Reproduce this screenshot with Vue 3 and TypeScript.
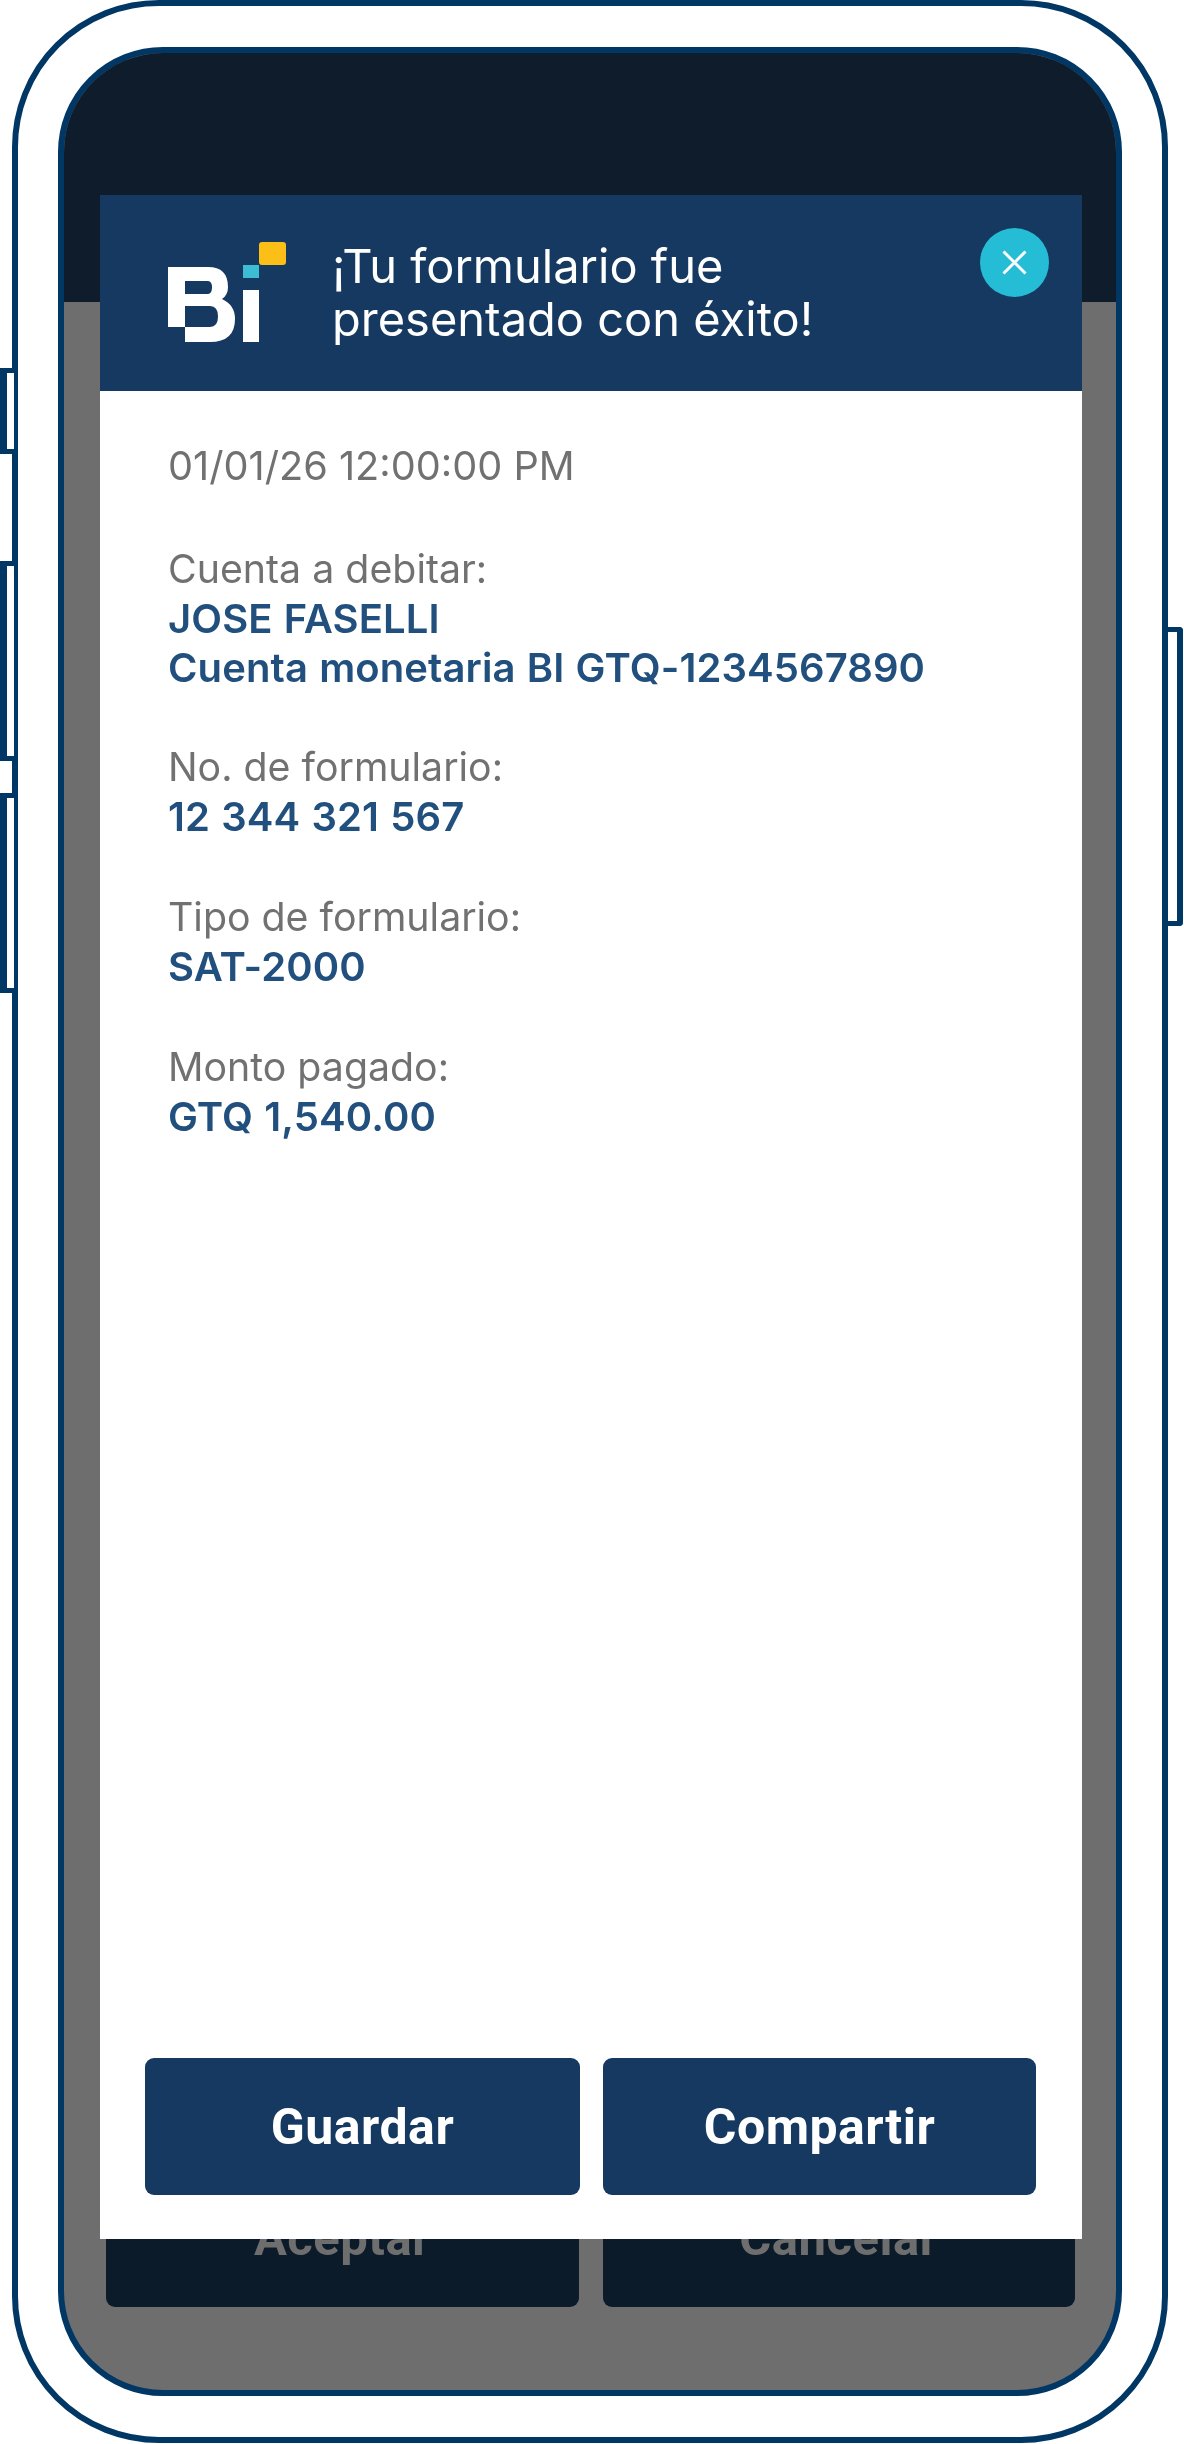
<script setup lang="ts">
interface Row { label: string; values: string[] }
const rows: Row[] = [
  { label: 'Cuenta a debitar:', values: ['JOSE FASELLI', 'Cuenta monetaria BI GTQ-1234567890'] },
  { label: 'No. de formulario:', values: ['12 344 321 567'] },
  { label: 'Tipo de formulario:', values: ['SAT-2000'] },
  { label: 'Monto pagado:', values: ['GTQ 1,540.00'] },
]
</script>

<template>
  <div class="page">
    <span class="key left k1"></span>
    <span class="key left k2"></span>
    <span class="key left k3"></span>
    <span class="key right k4"></span>
    <div class="phone">
      <div class="screen">
        <div class="status"></div>
        <div class="under">
          <div class="actions">
            <div class="under-btn">Aceptar</div>
            <div class="under-btn">Cancelar</div>
          </div>
        </div>
      </div>
    </div>

    <section class="modal">
      <header class="head">
        <svg class="logo" width="118" height="100" viewBox="0 0 118 100" aria-label="BI">
          <path fill="#fff" fill-rule="evenodd" d="M0 25H40Q60 25 60 45Q60 53 54 57Q67 63 67 77Q67 100 42 100H17V85H0ZM17 39V52H40Q44 52 44 45.500Q44 39 40 39ZM17 64V85H42Q50 85 50 74.500Q50 64 42 64Z"/>
          <rect x="75" y="48" width="16" height="52" fill="#fff"/>
          <rect x="75" y="23" width="16" height="13" fill="#3dbdd3"/>
          <rect x="91" y="0" width="27" height="23" rx="3" fill="#fbbf17"/>
        </svg>
        <h1 class="title">¡Tu formulario fue<br />presentado con éxito!</h1>
        <button class="close" aria-label="Cerrar">
          <svg width="25" height="25" viewBox="0 0 25 25">
            <path d="M1.500 1.500L23.500 23.500M23.500 1.500L1.500 23.500" stroke="#fff" stroke-width="3" fill="none"/>
          </svg>
        </button>
      </header>
      <div class="body">
        <p class="date">01/01/26 12:00:00 PM</p>
        <div v-for="row in rows" :key="row.label" class="group">
          <p class="label">{{ row.label }}</p>
          <p v-for="value in row.values" :key="value" class="value">{{ value }}</p>
        </div>
      </div>
      <footer class="foot">
        <button class="btn">Guardar</button>
        <button class="btn">Compartir</button>
      </footer>
    </section>
  </div>
</template>

<style>
html, body { margin: 0; background: #fff; }
</style>

<style scoped>
.page {
  position: relative;
  width: 1184px;
  height: 2444px;
  overflow: hidden;
  background: #fff;
  font-family: Inter, "Liberation Sans", sans-serif;
  filter: blur(0.6px);
}
.phone {
  box-sizing: border-box;
  width: 1156px;
  height: 2443px;
  margin-left: 12px;
  padding: 41px 40px 41px 40px;
  border: 6px solid #003764;
  border-radius: 147px;
  background: #fff;
}
.screen {
  box-sizing: border-box;
  display: flex;
  flex-direction: column;
  height: 100%;
  border: 6px solid #003764;
  border-radius: 105px;
  overflow: hidden;
  background: #6e6e6e;
}
.status { height: 249px; background: #0f1c2b; }
.under {
  flex: 1;
  display: flex;
  flex-direction: column;
  justify-content: flex-end;
  padding: 0 41px 83px 42px;
}
.actions { display: grid; grid-template-columns: 1fr 1fr; gap: 24px; }
.under-btn {
  height: 137px;
  display: flex;
  align-items: center;
  justify-content: center;
  border-radius: 9px;
  background: #0c1b2a;
  color: #6e6e6e;
  font-family: Roboto, sans-serif;
  font-weight: 700;
  font-size: 49px;
  letter-spacing: 0.5px;
}
.key {
  position: absolute;
  box-sizing: border-box;
  background: #fff;
  border: 5px solid #003764;
}
.left { left: 0; width: 14px; border-left-width: 7px; border-right: 0; }
.right { left: 1168px; width: 15px; border-left: 0; border-width: 5px 6px 5px 0; border-radius: 0 4px 4px 0; }
.k1 { top: 368px; height: 86px; }
.k2 { top: 561px; height: 200px; }
.k3 { top: 793px; height: 200px; }
.k4 { top: 627px; height: 299px; }
.modal {
  position: absolute;
  left: 100px;
  top: 195px;
  width: 982px;
  height: 2044px;
  display: flex;
  flex-direction: column;
  background: #fff;
}
.head {
  position: relative;
  box-sizing: border-box;
  height: 196px;
  display: flex;
  align-items: flex-start;
  padding: 47px 0 0 68px;
  background: #153960;
  color: #fff;
}
.logo { flex: none; }
.title {
  margin: -3px 0 0 46px;
  font-weight: 400;
  font-size: 47px;
  line-height: 53px;
}
.close {
  position: absolute;
  right: 33px;
  top: 33px;
  width: 69px;
  height: 69px;
  padding: 0;
  display: flex;
  align-items: center;
  justify-content: center;
  border: 0;
  border-radius: 50%;
  background: #25bcd6;
}
.body {
  flex: 1;
  padding: 50px 68px 0;
  display: flex;
  flex-direction: column;
  gap: 50px;
  font-size: 39.3px;
  line-height: 50px;
}
.body p { margin: 0; }
.date, .label { color: #717171; }
.date { margin-bottom: 3px !important; font-size: 39.7px; }
.value { color: #22507e; font-weight: 600; font-size: 40px; letter-spacing: 0.1px; word-spacing: 1px; }
.value + .value { margin-top: -1px !important; margin-bottom: -1px !important; }
.foot {
  display: grid;
  grid-template-columns: 435px 433px;
  gap: 23px;
  padding: 0 0 44px 45px;
}
.btn {
  height: 137px;
  border: 0;
  border-radius: 9px;
  background: #153960;
  color: #fff;
  font-family: Roboto, sans-serif;
  font-weight: 700;
  font-size: 50px;
  letter-spacing: 0.5px;
}
</style>
